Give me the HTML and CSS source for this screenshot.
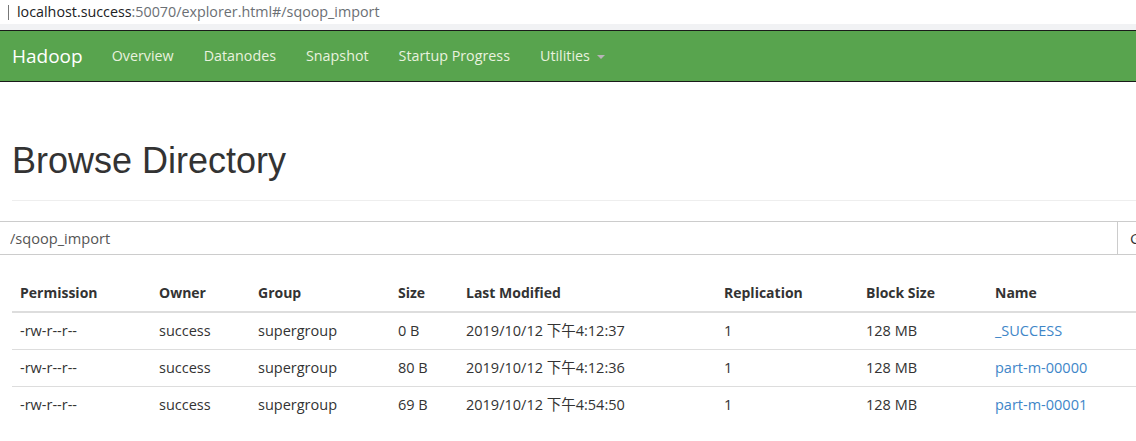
FILE: index.html
```html
<!DOCTYPE html>
<html>
<head>
<meta charset="utf-8">
<title>Browsing HDFS</title>
<link rel="stylesheet" href="styles.css">
</head>
<body>
<div class="addr">
  <span class="caret-bar"></span>
  <span class="host">localhost.success</span><span class="path">:50070/explorer.html#/sqoop_import</span>
</div>
<div class="band"></div>
<nav class="navbar">
  <a class="brand">Hadoop</a>
  <ul class="nav">
    <li><a>Overview</a></li>
    <li><a>Datanodes</a></li>
    <li><a>Snapshot</a></li>
    <li><a>Startup Progress</a></li>
    <li><a>Utilities <span class="caret"></span></a></li>
  </ul>
</nav>
<div class="container">
  <div class="page-header">
    <h1>Browse Directory</h1>
  </div>
  <div class="input-group">
    <input class="form-control" type="text" value="/sqoop_import">
    <span class="btn">Go!</span>
  </div>
  <table class="table">
    <thead>
      <tr>
        <th class="c1">Permission</th>
        <th class="c2">Owner</th>
        <th class="c3">Group</th>
        <th class="c4">Size</th>
        <th class="c5">Last Modified</th>
        <th class="c6">Replication</th>
        <th class="c7">Block Size</th>
        <th class="c8">Name</th>
      </tr>
    </thead>
    <tbody>
      <tr>
        <td>-rw-r--r--</td><td>success</td><td>supergroup</td><td>0 B</td>
        <td>2019/10/12 下午4:12:37</td><td>1</td><td>128 MB</td><td><a>_SUCCESS</a></td>
      </tr>
      <tr>
        <td>-rw-r--r--</td><td>success</td><td>supergroup</td><td>80 B</td>
        <td>2019/10/12 下午4:12:36</td><td>1</td><td>128 MB</td><td><a>part-m-00000</a></td>
      </tr>
      <tr>
        <td>-rw-r--r--</td><td>success</td><td>supergroup</td><td>69 B</td>
        <td>2019/10/12 下午4:54:50</td><td>1</td><td>128 MB</td><td><a>part-m-00001</a></td>
      </tr>
    </tbody>
  </table>
</div>
</body>
</html>
```
FILE: styles.css
```css
* { box-sizing: border-box; }
html, body { margin: 0; padding: 0; }
body {
  width: 1136px;
  overflow: hidden;
  background: #fff;
  color: #333;
  font-family: "Open Sans", "Noto Sans CJK SC", sans-serif;
  font-size: 14px;
  line-height: 20px;
}
.addr {
  height: 24px;
  display: flex;
  align-items: center;
  font-size: 14.3px;
  padding-left: 8px;
  background: #fff;
}
.caret-bar {
  width: 1px;
  height: 15px;
  background: #777;
  margin-right: 8px;
}
.host { color: #202124; }
.path { color: #6b6f74; }
.band { height: 6px; background: #f1f2f4; }
.navbar {
  height: 52px;
  background: #58a44e;
  border-top: 1px solid #1a1a1a;
  border-bottom: 1px solid #1a1a1a;
  display: flex;
  align-items: center;
  margin-bottom: 59px;
}
.brand {
  color: #fff;
  font-size: 19px;
  padding: 0 11px 0 12px;
}
.nav {
  list-style: none;
  margin: 0 0 0 3px;
  padding: 0;
  display: flex;
}
.nav a {
  display: block;
  color: #e9f2df;
  font-size: 14.3px;
  padding: 0 15px;
}
.caret {
  display: inline-block;
  width: 0;
  height: 0;
  margin-left: 3px;
  vertical-align: middle;
  border-top: 4px solid #b8b3b8;
  border-left: 4px solid transparent;
  border-right: 4px solid transparent;
}
.container { padding-left: 12px; }
.page-header {
  border-bottom: 1px solid #eee;
  padding-bottom: 9px;
  margin-bottom: 20px;
}
h1 {
  margin: 0 0 10px;
  font-family: "Liberation Sans", Arial, sans-serif;
  font-weight: 400;
  font-size: 36px;
  line-height: 40px;
  color: #333;
}
.input-group {
  display: flex;
  margin-left: -12px;
  height: 34px;
  margin-bottom: 20px;
}
.form-control {
  flex: 0 0 1118px;
  height: 34px;
  border: 1px solid #ccc;
  border-left: none;
  padding: 6px 10px;
  font-family: "Open Sans", sans-serif;
  font-size: 14.6px;
  color: #555;
  outline: none;
  background: #fff;
}
.btn {
  flex: 0 0 auto;
  height: 34px;
  border: 1px solid #ccc;
  border-left: none;
  padding: 6px 12px;
  font-size: 15px;
  color: #333;
  white-space: nowrap;
}
.table {
  border-collapse: collapse;
  width: 1124px;
}
.table th, .table td {
  text-align: left;
  padding: 8px;
  white-space: nowrap;
  font-size: 14.5px;
}
.table th {
  font-weight: 700;
  font-size: 14px;
  border-bottom: 2px solid #ddd;
}
.table td { border-top: 1px solid #ddd; }
.table tbody tr:first-child td { border-top: none; }
.c1 { width: 139px; }
.c2 { width: 99px; }
.c3 { width: 140px; }
.c4 { width: 68px; }
.c5 { width: 258px; }
.c6 { width: 142px; }
.c7 { width: 129px; }
.table a { color: #3e86c8; }
```
